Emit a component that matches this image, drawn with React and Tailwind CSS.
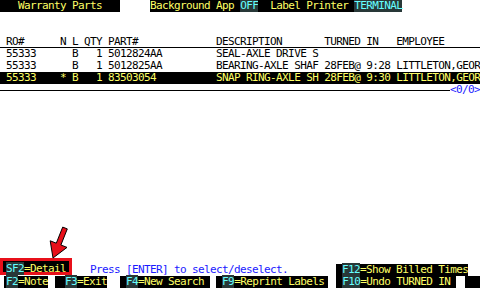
import React from 'react';

// 80x24 terminal grid, 6x12 px cells
const line = (parts) => {
  const a = Array(80).fill(' ');
  parts.forEach(([col, text]) => {
    for (let i = 0; i < text.length; i++) a[col + i] = text[i];
  });
  return a.join('').replace(/\s+$/, '');
};

const Key = ({ k, label }) => (
  <>
    <span className="bg-[#283838] text-[#6ff]">{k}</span>
    <span className="text-[#ff6]">{label}</span>
  </>
);

const App = () => {
  const header = line([[1, 'RO#'], [10, 'N'], [12, 'L'], [14, 'QTY'], [18, 'PART#'], [36, 'DESCRIPTION'], [54, 'TURNED IN'], [66, 'EMPLOYEE']]);
  const rows = [
    line([[1, '55333'], [12, 'B'], [16, '1'], [18, '5012824AA'], [36, 'SEAL-AXLE DRIVE S']]),
    line([[1, '55333'], [12, 'B'], [16, '1'], [18, '5012825AA'], [36, 'BEARING-AXLE SHAF'], [54, '28FEB@ 9:28'], [66, 'LITTLETON,GEOR']]),
  ];
  const selected = line([[1, '55333'], [10, '*'], [12, 'B'], [16, '1'], [18, '83503054'], [36, 'SNAP RING-AXLE SH'], [54, '28FEB@ 9:30'], [66, 'LITTLETON,GEOR']]);

  return (
    <div className="relative w-[480px] h-[288px] bg-white overflow-hidden font-['DejaVu_Sans_Mono',monospace] text-[11px] leading-3 tracking-[-0.62px] text-black whitespace-pre">
      {/* title bar */}
      <div className="flex h-3">
        <span className="bg-black text-[#ff6]">{'   Warranty Parts   '}</span>
        <span>{'     '}</span>
        <span className="bg-black text-[#ff6]">{'Background App '}</span>
        <span className="bg-[#283838] text-[#6ff]">OFF</span>
        <span className="bg-black text-[#ff6]">{'  Label Printer '}</span>
        <span className="bg-[#283838] text-[#6ff]">TERMINAL</span>
      </div>
      <div className="h-6" />

      {/* list */}
      <div className="h-3 border-b border-black box-border">{header}</div>
      {rows.map((r, i) => (
        <div key={i} className="h-3">{r}</div>
      ))}
      <div className="h-3 bg-black text-[#ff6]">{selected}</div>
      <div className="flex h-3 items-center">
        <div className="flex-1 h-px bg-black" />
        <span className="text-[#1a1aff]">{'<0/0>'}</span>
      </div>

      <div className="h-[168px]" />

      {/* function keys */}
      <div className="flex h-3 items-end">
        <div className="w-[72px] h-[17px] mb-px border-[3px] border-[#e8101a] bg-black pt-[2px] pl-[3px] overflow-visible">
          <Key k="SF2" label="=Detail" />
        </div>
        <span className="ml-[18px] text-[#1a1aff]">Press [ENTER] to select/deselect.</span>
        <span className="ml-[48px] pl-[6px] bg-black">
          <Key k="F12" label="=Show Billed Times" />
        </span>
      </div>
      <div className="flex h-3">
        <span className="ml-[4px] pl-[2px] bg-black"><Key k="F2" label="=Note" /></span>
        <span className="ml-[7px] pl-[10px] bg-black"><Key k="F3" label="=Exit" /></span>
        <span className="ml-[13px] px-[6px] bg-black"><Key k="F4" label="=New Search" /></span>
        <span className="ml-[6px] pl-[6px] pr-[4px] bg-black"><Key k="F9" label="=Reprint Labels" /></span>
        <span className="ml-[8px] px-[6px] bg-black"><Key k="F10" label="=Undo TURNED IN" /></span>
        <span className="w-[9px] bg-white" />
        <span className="flex-1 bg-black" />
      </div>

      {/* annotation arrow */}
      <svg className="absolute left-[44px] top-[224px] w-[28px] h-[38px]" viewBox="44 224 28 38">
        <polygon
          points="62.7,227.1 67.3,228.9 60.9,245 67,247.4 53,258 50.2,240.8 56.3,243.2"
          fill="#e8101a"
          stroke="#000"
          strokeWidth="1"
          strokeLinejoin="round"
        />
      </svg>
    </div>
  );
};

export default App;
